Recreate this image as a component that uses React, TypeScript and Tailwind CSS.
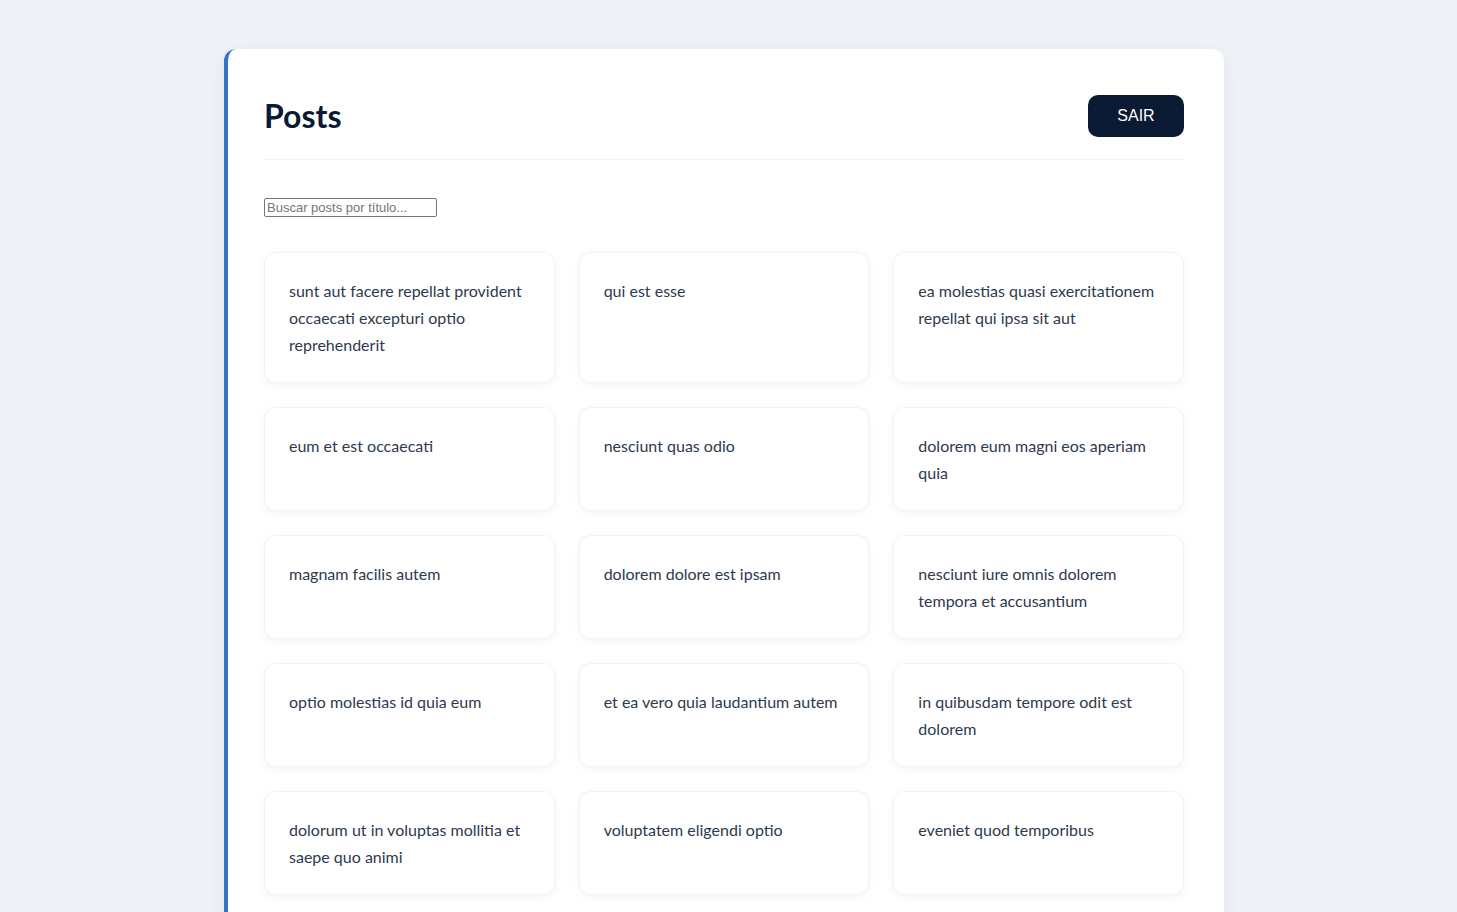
const posts = [
  "sunt aut facere repellat provident occaecati excepturi optio reprehenderit",
  "qui est esse",
  "ea molestias quasi exercitationem repellat qui ipsa sit aut",
  "eum et est occaecati",
  "nesciunt quas odio",
  "dolorem eum magni eos aperiam quia",
  "magnam facilis autem",
  "dolorem dolore est ipsam",
  "nesciunt iure omnis dolorem tempora et accusantium",
  "optio molestias id quia eum",
  "et ea vero quia laudantium autem",
  "in quibusdam tempore odit est dolorem",
  "dolorum ut in voluptas mollitia et saepe quo animi",
  "voluptatem eligendi optio",
  "eveniet quod temporibus",
  "sint suscipit perspiciatis velit dolorum rerum ipsa laboriosam odio",
  "fugit voluptas sed molestias voluptatem provident",
  "voluptate et itaque vero tempora molestiae",
];

export default function App() {
  return (
    <div className="min-h-screen bg-[#eef2f7] pt-[49px] pb-10 font-['Lato','Noto_Sans',sans-serif]">
      <div className="ml-[224px] w-[1000px] bg-white rounded-xl border-l-4 border-[#3077c9] shadow-[0_4px_16px_rgba(15,23,42,0.06)] pl-9 pr-10 pt-10 pb-10">
        <div className="flex items-center justify-between pb-4 border-b border-[#f1f3f6]">
          <h1 className="text-[32px] leading-[54px] font-bold text-[#0b1a33]">Posts</h1>
          <button className="h-[42px] w-24 rounded-[10px] bg-[#0b1a33] text-white text-base font-['Liberation_Sans',Arial,sans-serif]">
            SAIR
          </button>
        </div>

        <input
          type="text"
          placeholder="Buscar posts por título..."
          className="mt-[38px] block w-[173px] h-[19px] border border-[#767676] px-[2px] text-[13px] font-['Liberation_Sans',Arial,sans-serif] placeholder:text-[#757575] rounded-[2px]"
        />

        <div className="mt-[35px] grid grid-cols-3 gap-6">
          {posts.map((title, i) => (
            <div
              key={i}
              className="bg-white rounded-xl border border-[#f1f3f7] shadow-[0_2px_8px_rgba(15,23,42,0.05)] p-6"
            >
              <p className="text-base leading-[27px] text-[#2d3a4f]">{title}</p>
            </div>
          ))}
        </div>
      </div>
    </div>
  );
}
